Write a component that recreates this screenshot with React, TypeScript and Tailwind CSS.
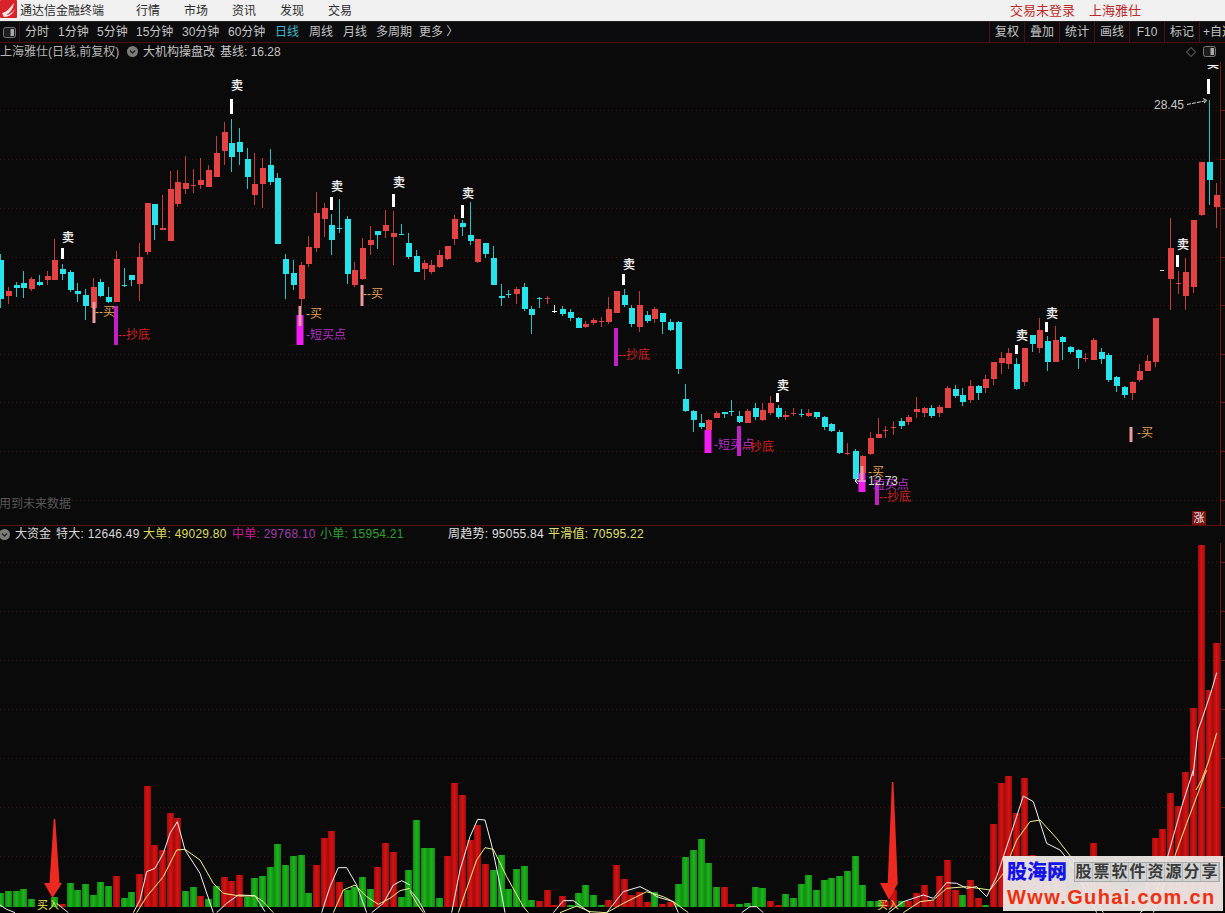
import type { ReactNode } from "react";

type Kind = "r" | "c" | "w";
type Row = [number, number, number, number, Kind] | null;

const slotX = (i: number) => Math.round(0.4 + 7.695 * i);

// body top, body bottom, wick top, wick bottom, measured on 3x crops
const part1: Row[] = [
    [570, 688, 552, 714, "c"], [662, 676, 652, 702, "r"], [644, 654, 636, 682, "c"], [640, 654, 604, 684, "c"],
    [628, 657, 620, 664, "r"], [636, 644, 615, 648, "c"], [618, 630, 602, 645, "r"], [570, 630, 507, 630, "r"],
    [597, 612, 583, 630, "c"], [606, 660, 600, 666, "c"], [663, 672, 640, 696, "c"], [675, 708, 658, 750, "c"],
    [651, 714, 625, 718, "r"], [636, 678, 628, 680, "c"], [681, 696, 652, 698, "c"], [568, 696, 543, 696, "r"],
    [645, 648, 595, 650, "c"], [615, 630, 615, 648, "c"], [560, 642, 518, 693, "r"], [400, 546, 400, 554, "r"],
    [403, 465, 403, 510, "c"], [475, 481, 375, 481, "r"], [358, 513, 303, 513, "r"], [336, 402, 300, 412, "r"],
    [339, 357, 259, 373, "r"], [345, 347, 298, 370, "r"], [330, 345, 264, 357, "r"], [300, 351, 285, 351, "r"],
    [249, 321, 198, 321, "r"], [186, 243, 156, 285, "r"], [220, 261, 148, 306, "c"], [216, 246, 175, 285, "c"],
    [267, 321, 235, 357, "c"], [342, 375, 250, 406, "r"], [294, 342, 265, 414, "r"], [285, 336, 238, 345, "c"],
    [324, 522, 310, 522, "c"], [567, 612, 552, 687, "c"], [609, 645, 570, 660, "c"], [585, 687, 577, 708, "r"],
    [531, 583, 498, 591, "r"], [429, 534, 367, 546, "r"], [415, 447, 400, 502, "r"], [465, 510, 432, 555, "c"],
    [474, 477, 387, 489, "c"], [447, 612, 438, 642, "c"], [600, 645, 576, 651, "r"], [534, 627, 504, 630, "r"],
    [510, 525, 468, 555, "r"], [484, 495, 482, 537, "c"], [465, 483, 420, 505, "r"], [489, 501, 423, 585, "r"],
    [492, 495, 462, 496, "c"], [519, 561, 489, 566, "c"],
];

const part2: Row[] = [
    [258, 306, 240, 306, "c"], [279, 297, 270, 330, "r"], [285, 306, 270, 312, "r"], [255, 291, 240, 294, "r"],
    [228, 267, 228, 270, "r"], [147, 207, 135, 225, "r"], [159, 171, 150, 198, "c"], [195, 213, 96, 225, "c"],
    [207, 276, 207, 279, "r"], [219, 252, 219, 264, "c"], [264, 345, 228, 345, "c"], [378, 383, 343, 408, "c"],
    [372, 375, 360, 384, "c"], [356, 372, 350, 402, "r"], [351, 417, 339, 423, "c"], [417, 435, 408, 492, "c"],
    [383, 385, 381, 414, "c"], [384, 388, 378, 402, "r"], [423, 425, 405, 429, "w"], [417, 432, 408, 438, "c"],
    [426, 444, 417, 453, "c"], [444, 474, 441, 474, "c"], [462, 471, 453, 474, "r"], [450, 459, 444, 465, "r"],
    [453, 455, 441, 471, "r"], [417, 456, 381, 462, "r"], [363, 429, 363, 429, "r"], [375, 405, 357, 411, "c"],
    [414, 462, 405, 471, "c"], [405, 471, 363, 486, "r"], [435, 453, 423, 459, "c"], [417, 447, 411, 459, "r"],
    [429, 456, 429, 492, "c"], [456, 480, 447, 483, "c"], [456, 597, 453, 612, "c"], [687, 723, 642, 726, "c"],
    [723, 750, 720, 786, "c"], [759, 771, 732, 777, "c"], [750, 780, 748, 790, "r"], [729, 744, 723, 744, "r"],
    [727, 732, 726, 744, "c"], [723, 727, 690, 738, "c"], [738, 756, 723, 760, "c"], [723, 759, 717, 760, "r"],
    [714, 741, 699, 750, "c"], [720, 750, 699, 753, "r"], [699, 729, 678, 735, "r"], [714, 741, 705, 747, "c"],
    [735, 741, 723, 750, "r"], [729, 731, 714, 738, "r"], [732, 735, 717, 741, "c"], [729, 738, 717, 741, "r"],
    [726, 741, 726, 747, "c"],
];

const part3: Row[] = [
    [1071, 1101, 1068, 1110, "c"], [1092, 1113, 1089, 1116, "c"], [1116, 1179, 1110, 1182, "c"], [1178, 1181, 1149, 1185, "r"],
    [1173, 1257, 1167, 1260, "c"], [1188, 1240, 1185, 1250, "r"], [1134, 1182, 1116, 1185, "r"], [1122, 1134, 1074, 1134, "r"],
    [1110, 1113, 1098, 1134, "r"], [1101, 1105, 1083, 1125, "r"], [1083, 1098, 1074, 1107, "c"], [1071, 1086, 1065, 1095, "r"],
    [1047, 1056, 1011, 1074, "r"], [1044, 1059, 1041, 1071, "r"], [1044, 1068, 1035, 1074, "c"], [1041, 1059, 1035, 1071, "r"],
    [984, 1044, 978, 1044, "r"], [987, 1008, 975, 1014, "c"], [1005, 1026, 984, 1038, "c"], [978, 1020, 960, 1029, "r"],
    [978, 999, 975, 1020, "c"], [957, 984, 945, 999, "r"], [906, 957, 906, 975, "r"], [894, 909, 876, 942, "r"],
    [879, 912, 864, 927, "r"], [912, 987, 894, 990, "c"], [864, 966, 864, 978, "r"], [825, 852, 825, 876, "c"],
    [810, 864, 774, 879, "r"], [843, 906, 828, 933, "c"], [840, 906, 798, 906, "r"], [831, 846, 828, 900, "c"],
    [861, 876, 858, 882, "c"], [870, 894, 867, 927, "c"], [893, 896, 879, 906, "r"], [840, 900, 834, 900, "r"],
    [876, 897, 864, 912, "c"], [885, 960, 879, 966, "c"], [951, 978, 948, 996, "c"], [981, 1005, 978, 1014, "c"],
    [966, 999, 963, 1020, "r"], [933, 960, 912, 966, "r"], [903, 933, 885, 933, "r"], [774, 906, 774, 921, "r"],
    null, [564, 657, 474, 750, "r"], [669, 672, 633, 702, "r"], [636, 708, 594, 750, "r"],
    [480, 681, 480, 699, "r"], [306, 465, 306, 468, "r"], [306, 360, 120, 435, "c"], [405, 441, 369, 504, "r"],
];

const candles = [
    ...part1.map((c, i) => ({ c, i, base: 70 })),
    ...part2.map((c, i) => ({ c, i: i + 54, base: 170 })),
    ...part3.map((c, i) => ({ c, i: i + 107, base: 60 })),
];

const kindColor: Record<Kind, string> = { r: "#e54343", c: "#27e4ec", w: "#ffffff" };

// g/r + top of bar on the 3x crops, baseline is y=907
const barSpec =
    "g369 g363 g363 g357 g387 - - g381 r402 g339 g360 g342 g375 g336 g348 r318 g384 g366 r312 r48 r225 r240 r129 r144 g363 g351 r378 g387 g348 r321 r333 r315 g381 g324 g318 g291 g222 g285 g258 g255 g369 r285 r204 r183 r336 g360 g351 g321 g357 r291 r219 r246 g381 g300 " +
    "g150 g234 g234 g384 r258 r39 r75 r210 r165 r282 g300 g255 g357 g297 g288 g390 r393 r360 r405 r378 g405 g369 g345 g375 g405 r390 r285 r327 r375 r366 r396 g366 r402 r396 g342 g261 g240 g207 g279 g351 r351 r402 g402 g399 g351 g354 r393 r405 g372 g384 g342 g315 g360 " +
    "g330 g324 g318 g303 g258 g345 g393 g393 r393 r360 g393 r393 r369 r345 r390 r318 r270 r360 g375 r330 r384 g405 r162 r39 r18 r129 r24 r255 r290 r320 r330 r340 g380 r360 r300 r219 r300 r340 r350 g380 r360 r350 r300 r204 r177 r69 r108 r6 r-186 r-675 r-240 r-381";

const bars = barSpec.split(" ").map((s) => (s === "-" ? null : { kind: s[0], top: 770 + Number(s.slice(1)) / 3 }));

const toPoints = (pts: number[][], ox: number, oy = 770) => pts.map(([x, y]) => `${ox + x / 3},${oy + y / 3}`).join(" ");

const whiteLines = [
    toPoints([[0, 405], [20, 418], [45, 428]], 0),
    toPoints([[170, 400], [205, 428]], 0),
    toPoints([[400, 428], [420, 390], [440, 305], [465, 295], [490, 250], [510, 190], [532, 155], [555, 240], [600, 310], [640, 428]], 0),
    toPoints([[650, 428], [680, 400], [715, 375], [765, 377], [795, 425]], 0),
    toPoints([[965, 428], [990, 350], [1015, 293], [1040, 293], [1070, 345], [1100, 428]], 0),
    toPoints([[1115, 428], [1150, 400], [1180, 345], [1205, 332], [1230, 345]], 0),
    toPoints([[0, 360], [25, 390], [45, 428]], 410),
    toPoints([[125, 428], [150, 300], [180, 200], [203, 148], [225, 150], [245, 225], [265, 320], [285, 428]], 410),
    toPoints([[430, 428], [460, 392], [490, 392], [540, 428]], 410),
    toPoints([[590, 428], [640, 365], [690, 350], [720, 365], [740, 380], [790, 395], [805, 428]], 410),
    toPoints([[995, 428], [1020, 410], [1040, 410], [1060, 428]], 410),
    toPoints([[205, 428], [250, 395], [310, 375], [340, 385], [380, 338], [410, 340], [440, 355], [470, 350], [500, 380], [530, 320], [570, 200], [610, 78], [640, 95], [680, 220], [720, 240], [760, 290], [830, 428]], 820),
    toPoints([[960, 428], [1000, 400], [1040, 270], [1085, 110], [1120, 0]], 820),
    "1193,776 1198,730 1201.7,720 1211.7,690 1216.7,672.7",
];

const yellowLines = [
    toPoints([[410, 428], [440, 380], [490, 320], [530, 240], [555, 238], [600, 270], [640, 340], [670, 370], [720, 378], [765, 378], [790, 395], [820, 428]], 0),
    toPoints([[1000, 428], [1030, 360], [1065, 345], [1100, 380], [1135, 403], [1170, 385], [1200, 362], [1230, 355]], 0),
    toPoints([[0, 365], [20, 400], [40, 428]], 410),
    toPoints([[145, 428], [200, 270], [225, 233], [250, 238], [290, 320], [340, 410], [355, 428]], 410),
    toPoints([[450, 428], [500, 408], [540, 425], [590, 428], [640, 400], [710, 365], [760, 380], [790, 395], [835, 428]], 410),
    toPoints([[250, 428], [300, 395], [340, 390], [380, 355], [440, 350], [510, 360], [550, 310], [590, 210], [630, 155], [660, 150], [710, 205], [760, 270], [850, 428]], 820),
    toPoints([[1000, 428], [1060, 270], [1100, 160], [1160, 0]], 820),
    "1196,790 1201.7,780 1208,763 1216.7,733",
];

const sells = [
    [68, 238, 62, 248, 259], [237, 86, 231, 99, 114], [337, 187, 331, 197, 210], [399, 183, 393, 194, 207],
    [468, 194, 462, 205, 218], [629, 265, 623, 274, 285], [783, 386, 777, 393, 402], [1022, 336, 1016, 345, 354],
    [1052, 314, 1046, 322, 332], [1183, 245, 1177, 255, 267], [1213, 64, 1208, 79, 94],
];

// x, top, bottom, width, color
const markers: [number, number, number, number, string][] = [
    [116, 306, 345, 4, "#c41fc6"], [300, 315, 345, 7, "#f01cf0"], [300, 306, 326, 3, "#ee9aa8"],
    [94, 302, 323, 3, "#ee9aa0"], [362, 285, 306, 3, "#ee9aa0"], [616, 328, 366, 4, "#c41fc6"],
    [708, 430, 453, 7, "#f01cf0"], [739, 426, 456, 4, "#c41fc6"], [862, 473, 492, 7, "#f01cf0"],
    [862, 466, 480, 3, "#ee9aa0"], [877, 485, 505, 4, "#c41fc6"], [1131, 427, 442, 3, "#ee9aa0"],
];

const buy = "#e0a458";
const bottom = "#d02222";
const shortBuy = "#b632c8";
const labels: [number, number, string, string][] = [
    [95, 312, "--买", buy], [118, 335, "--抄底", bottom], [306, 335, "-短买点", shortBuy], [306, 314, "-买", buy],
    [363, 294, "--买", buy], [618, 355, "--抄底", bottom], [714, 445, "-短买点", shortBuy], [742, 447, "--抄底", bottom],
    [868, 472, "-买", buy], [873, 485, "短买点", shortBuy], [879, 497, "--抄底", bottom], [1137, 433, "-买", buy],
];

const menu = ["行情", "市场", "资讯", "发现", "交易"];

const leftTools = [
    ["分时", "w-[33px]"], ["1分钟", "w-[39px]"], ["5分钟", "w-[39px]"], ["15分钟", "w-[46px]"], ["30分钟", "w-[46px]"],
    ["60分钟", "w-[47px]"], ["日线", "w-[34px] text-[#3fb8c8]"], ["周线", "w-[34px]"], ["月线", "w-[33px]"], ["多周期", "w-[43px]"],
    ["更多 〉", "w-[50px]"],
];
const rightTools = ["复权", "叠加", "统计", "画线", "F10", "标记"];
const shareChars = ["股", "票", "软", "件", "资", "源", "分", "享"];

function PanelIcon() {
    return (
        <svg width="13" height="11" viewBox="0 0 13 11" className="shrink-0">
            <rect x="0.5" y="0.5" width="12" height="10" rx="2" fill="#1c1c1c" stroke="#777" />
            <rect x="7.5" y="2" width="3.5" height="7" fill="#aaa" />
        </svg>
    );
}

function Chevron() {
    return (
        <svg width="11" height="11" viewBox="0 0 11 11" className="shrink-0">
            <circle cx="5.5" cy="5.5" r="5.5" fill="#7c7c7c" />
            <path d="M3 4.5 L5.5 7 L8 4.5" fill="none" stroke="#222" strokeWidth="1.3" />
        </svg>
    );
}

function Grid({ ys }: { ys: number[] }) {
    return (
        <g>
            {ys.map((y) => (
                <g key={y}>
                    <line x1="0" x2="1220" y1={y + 0.5} y2={y + 0.5} stroke="#3c1010" strokeDasharray="1 3" />
                    <line x1="1220" x2="1225" y1={y + 0.5} y2={y + 0.5} stroke="#7a1414" />
                </g>
            ))}
        </g>
    );
}

function Label({ x, y, color, size = 12, children }: { x: number; y: number; color: string; size?: number; children: ReactNode }) {
    return (
        <text x={x} y={y} fill={color} fontSize={size} dominantBaseline="central">
            {children}
        </text>
    );
}

function Arrow({ top, left, right, tipX, tipY, headY, x }: { top: number; left: number; right: number; tipX: number; tipY: number; headY: number; x: number }) {
    return (
        <polygon
            points={`${x - 0.8},${top} ${x + 0.8},${top} ${x + 5},${headY} ${right},${headY} ${tipX},${tipY} ${left},${headY} ${x - 5},${headY}`}
            fill="#ee2a20"
        />
    );
}

function UpperChart() {
    const ys = [110, 159, 208, 257, 305, 354, 402, 451, 500];
    return (
        <svg width="1225" height="463" viewBox="0 62 1225 463" className="block shrink-0">
            <Grid ys={ys} />
            <line x1="1220.5" x2="1220.5" y1="62" y2="525" stroke="#7a1414" />
            {candles.map(({ c, i, base }) => {
                if (!c) return null;
                const [bt, bb, wt, wb, kind] = c;
                const x = slotX(i);
                const top = Math.round(base + bt / 3);
                const h = Math.max(1, Math.round((bb - bt) / 3));
                return (
                    <g key={i} shapeRendering="crispEdges">
                        <rect x={x} y={base + wt / 3} width="1" height={(wb - wt) / 3} fill={kindColor[kind]} opacity="0.85" />
                        <rect x={h < 2 ? x - 2 : x - 2.5} y={top} width={h < 2 ? 5 : 6} height={h} fill={kindColor[kind]} />
                    </g>
                );
            })}
            {sells.map(([tx, ty, bx, b1, b2]) => (
                <g key={bx}>
                    <rect x={bx - 1} y={b1} width="3" height={b2 - b1} fill="#fff" />
                    <text x={tx} y={ty} fill="#fff" stroke="#fff" strokeWidth="0.25" fontSize="12" textAnchor="middle" dominantBaseline="central">
                        卖
                    </text>
                </g>
            ))}
            {/* the topmost 卖 is cut by the panel's top edge */}
            <rect x="1200" y="62" width="20" height="3" fill="#0a0a0b" />
            {markers.map(([x, t, b, w, color]) => (
                <rect key={`${x}-${t}`} x={x - w / 2} y={t} width={w} height={b - t} fill={color} />
            ))}
            {labels.map(([x, y, text, color]) => (
                <Label key={`${x}-${y}`} x={x} y={y} color={color}>
                    {text}
                </Label>
            ))}
            <Label x={1154} y={105} color="#c8c8c8">
                28.45
            </Label>
            <path d="M1187 104.5 L1207 100.5 M1203 98.5 L1207 100.5 L1204 103" stroke="#ddd" fill="none" strokeDasharray="4 1" />
            <rect x="1160" y="270" width="4" height="1" fill="#ddd" />
            <Label x={868} y={481} color="#d8d8d8">
                12.73
            </Label>
            <path d="M866 481 L855 481 M858 478 L855 481 L858 484" stroke="#eee" fill="none" />
            <Label x={-1} y={504} color="#575757">
                用到未来数据
            </Label>
            <rect x="1192" y="511" width="14" height="14" fill="#7c1212" />
            <Label x={1193.5} y={518} color="#eee" size={11}>
                涨
            </Label>
        </svg>
    );
}

function LowerChart() {
    const ys = [562, 611, 660, 709, 758, 807, 856];
    return (
        <svg width="1225" height="370" viewBox="0 543 1225 370" className="block shrink-0">
            <defs>
                <linearGradient id="redBar">
                    <stop offset="0" stopColor="#a00c0c" />
                    <stop offset="0.5" stopColor="#d81212" />
                    <stop offset="1" stopColor="#a00c0c" />
                </linearGradient>
                <linearGradient id="greenBar">
                    <stop offset="0" stopColor="#118c11" />
                    <stop offset="0.5" stopColor="#1cb41c" />
                    <stop offset="1" stopColor="#118c11" />
                </linearGradient>
            </defs>
            <Grid ys={ys} />
            <line x1="1220.5" x2="1220.5" y1="543" y2="913" stroke="#7a1414" />
            {bars.map((b, i) =>
                b ? (
                    <rect
                        key={i}
                        x={slotX(i) - 3}
                        y={b.top}
                        width="7"
                        height={907 - b.top}
                        fill={b.kind === "r" ? "url(#redBar)" : "url(#greenBar)"}
                        shapeRendering="crispEdges"
                    />
                ) : null,
            )}
            <rect x="0" y="907" width="1225" height="6" fill="#020202" />
            {whiteLines.map((p) => (
                <polyline key={p} points={p} fill="none" stroke="#f4f4f4" strokeWidth="1" />
            ))}
            {yellowLines.map((p) => (
                <polyline key={p} points={p} fill="none" stroke="#f2f28c" strokeWidth="1" />
            ))}
            <Arrow x={54.5} top={819} left={44} right={62} tipX={52.5} tipY={898} headY={883} />
            <Arrow x={892.7} top={782} left={880} right={898} tipX={889} tipY={900} headY={883} />
            <Label x={37} y={905} color="#e2e24e" size={11}>
                买入
            </Label>
            <Label x={877} y={905} color="#ecc45a" size={11}>
                买入
            </Label>
        </svg>
    );
}

function GuhaiBadge() {
    return (
        <div className="absolute left-[1003px] top-[856px] h-[55px] w-[220px] bg-[#ebe8e6]/95 pl-[4px] pt-[6px] leading-none">
            <div className="flex h-[20px] items-center">
                <span className="w-[67px] whitespace-nowrap text-[20px] font-black text-[#1414e6]">股海网</span>
                <div className="flex border border-[#aaa] bg-[#d2d2d2]">
                    {shareChars.map((ch) => (
                        <span key={ch} className="flex h-[18px] w-[18px] items-center justify-center border-r border-[#b8b8b8] text-[16px] font-bold text-[#3a3a3a]">
                            {ch}
                        </span>
                    ))}
                </div>
            </div>
            <div className="mt-[5px] whitespace-nowrap text-[20px] font-bold tracking-[1.35px] text-[#ee3010]">Www.Guhai.com.cn</div>
        </div>
    );
}

export default function App() {
    return (
        <div className="relative flex h-[913px] w-[1225px] flex-col overflow-hidden bg-[#0a0a0b] font-['Liberation_Sans','Noto_Sans_CJK_SC',sans-serif] text-[12px] text-[#c4c4c4]">
            {/* title bar */}
            <div className="flex h-[21px] shrink-0 items-center bg-[#f0f0f0] text-[#2c2c2c]">
                <svg width="18" height="18" viewBox="0 0 18 18" className="mb-[3px] shrink-0">
                    <rect width="17" height="18" rx="1" fill="#d8232a" />
                    <path d="M2 13 C7 12 10 8 14 3 C13 9 10 13 6 15 C9 15 12 13 15 9 C13 14 9 17 4 17 Z" fill="#fbe6e6" />
                </svg>
                <span className="ml-[2px] w-[116px] whitespace-nowrap">通达信金融终端</span>
                <div className="flex">
                    {menu.map((name) => (
                        <span key={name} className="w-[48px] whitespace-nowrap">
                            {name}
                        </span>
                    ))}
                </div>
                <div className="ml-auto mr-[84px] flex gap-[14px] text-[13px] text-[#b92a2a]">
                    <span className="whitespace-nowrap">交易未登录</span>
                    <span className="whitespace-nowrap">上海雅仕</span>
                </div>
            </div>

            {/* period toolbar */}
            <div className="flex h-[22px] shrink-0 items-center border-y border-[#4a1010] border-t-[#222] bg-[#0c0c0e]">
                <div className="flex h-full w-[20px] items-center justify-center border-r border-[#3a1414]">
                    <PanelIcon />
                </div>
                <div className="flex pl-[5px]">
                    {leftTools.map(([name, cls]) => (
                        <span key={name} className={`whitespace-nowrap ${cls}`}>
                            {name}
                        </span>
                    ))}
                </div>
                <div className="ml-[520px] flex h-full">
                    {rightTools.map((name) => (
                        <span key={name} className="flex w-[35px] items-center justify-center whitespace-nowrap border-l border-[#4a1414]">
                            {name}
                        </span>
                    ))}
                    <span className="flex w-[26px] items-center overflow-hidden whitespace-nowrap border-l border-[#4a1414] pl-[3px]">+自选</span>
                </div>
            </div>

            {/* info row */}
            <div className="flex h-[19px] shrink-0 items-center pb-[2px]">
                <span className="w-[127px] whitespace-nowrap text-[#b4b4b4]">上海雅仕(日线,前复权)</span>
                <Chevron />
                <span className="ml-[5px] whitespace-nowrap">大机构操盘改</span>
                <span className="ml-[5px] whitespace-nowrap">基线: 16.28</span>
                <div className="ml-auto mr-[9px] flex items-center gap-[7px]">
                    <svg width="10" height="10" viewBox="0 0 10 10">
                        <path d="M5 0.5 L9.5 5 L5 9.5 L0.5 5 Z" fill="none" stroke="#777" />
                    </svg>
                    <PanelIcon />
                </div>
            </div>

            <UpperChart />

            {/* lower panel header */}
            <div className="flex h-[18px] shrink-0 items-center whitespace-nowrap border-t border-[#5c1212] pb-[1px] tracking-[0.25px]">
                <span className="ml-[-1px] w-[16px]">
                    <Chevron />
                </span>
                <span className="w-[41px] tracking-normal text-[#d8d8d8]">大资金</span>
                <span className="w-[87px] text-[#d8d8d8]">特大: 12646.49</span>
                <span className="w-[89px] text-[#dcdc5c]">大单: 49029.80</span>
                <span className="w-[88px] text-[#a23cae]">
                    <span className="text-[#c81c8e]">中单</span>: 29768.10
                </span>
                <span className="w-[128px] text-[#2fa02f]">小单: 15954.21</span>
                <span className="w-[100px] text-[#e0e0e0]">周趋势: 95055.84</span>
                <span className="text-[#e0e070]">平滑值: 70595.22</span>
            </div>

            <LowerChart />
            <GuhaiBadge />
        </div>
    );
}
